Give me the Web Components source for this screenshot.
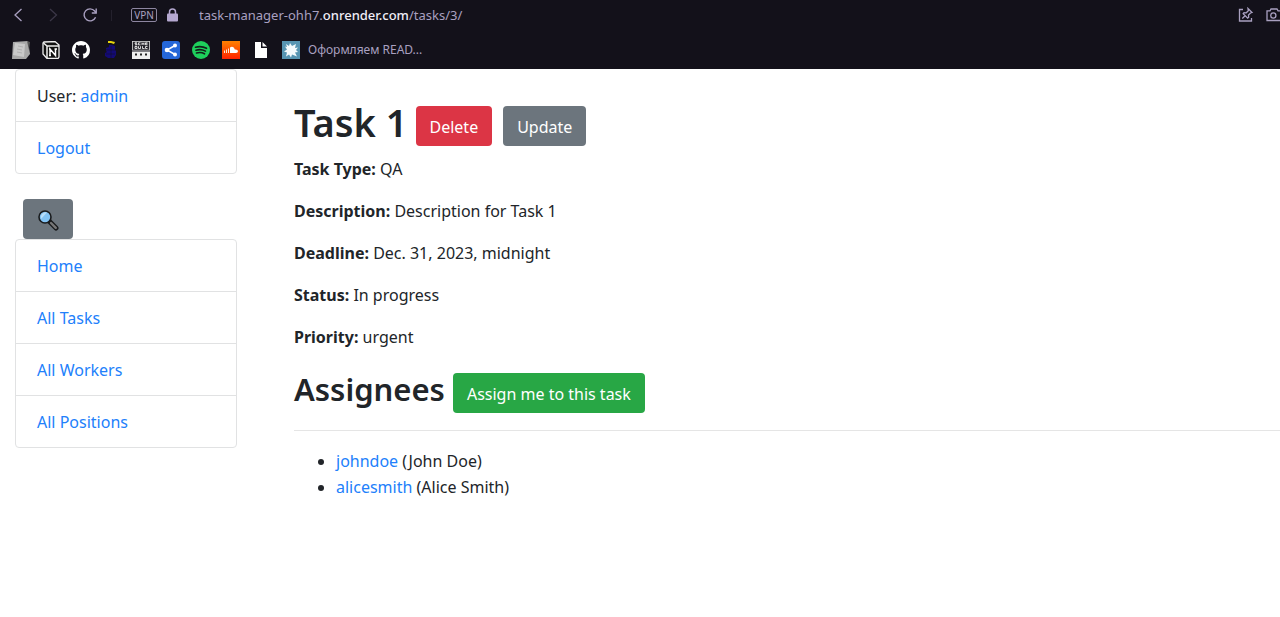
<!DOCTYPE html>
<html lang="en">
<head>
<meta charset="utf-8">
<meta name="viewport" content="width=device-width, initial-scale=1">
<title>Task 1</title>
<style>
  body { margin: 0; background: #fff; color: #212529; font: 16px/26px "Noto Sans", "Open Sans", sans-serif; }
</style>
</head>
<body>
<task-app></task-app>

<template id="browser-bar">
  <style>
    :host { display: block; background: #13111a; color: #a9a0c0; height: 69px; overflow: hidden; }
    .row { display: flex; align-items: center; }
    .nav { height: 30px; padding-left: 12px; font-size: 13px; line-height: 20px; }
    button { display: block; flex: none; border: 0; padding: 0; background: none; color: inherit; font: inherit; }
    svg { display: block; }
    .forward { color: #3b3747; margin-left: 22px; }
    .reload { margin-left: 24px; }
    .divider { width: 1px; height: 11px; margin: 0 19px 0 13px; background: #24212d; }
    .vpn { height: 14px; width: 26px; box-sizing: border-box; border: 1px solid #8d86a0; border-radius: 2px; font-size: 10px; line-height: 12px; text-align: center; }
    .lock { margin: 0 20px 0 9px; }
    .url b { color: #f0edf7; font-weight: 500; }
    .tools { display: flex; gap: 12px; margin-left: auto; }
    .marks { height: 39px; padding-left: 12px; gap: 12px; }
  </style>
  <div class="row nav">
    <button aria-label="Back"><svg width="12" height="16" viewBox="0 0 12 16" fill="none" stroke="currentColor" stroke-width="1.3"><path d="M9.500 2 3 8l6.500 6"/></svg></button>
    <button class="forward" aria-label="Forward" disabled><svg width="12" height="16" viewBox="0 0 12 16" fill="none" stroke="currentColor" stroke-width="1.3"><path d="m4 2 6.500 6L4 14"/></svg></button>
    <button class="reload" aria-label="Reload"><svg width="16" height="16" viewBox="0 0 16 16" fill="none" stroke="currentColor" stroke-width="1.4"><path d="M13.600 10.200A6 6 0 1 1 12.700 4l1.300 1.700"/><path d="M14.200 1.500v4.500H9.800"/></svg></button>
    <span class="divider"></span>
    <button class="vpn">VPN</button>
    <svg class="lock" width="13" height="14" viewBox="0 0 13 14" aria-hidden="true"><rect x="1" y="5.500" width="11" height="8" rx="1" fill="#b5a8d0"/><path d="M3.500 6V4a3 3 0 0 1 6 0v2" fill="none" stroke="#b5a8d0" stroke-width="1.500"/></svg>
    <span class="url">task-manager-ohh7.<b>onrender.com</b>/tasks/3/</span>
    <span class="tools">
      <button aria-label="Pin page"><svg width="16" height="16" viewBox="0 0 16 16" fill="none" stroke="currentColor" stroke-width="1.300"><path d="M5 2.500H1.500v11.500h12V11"/><path d="m10 1.500 4 4-1.500.5-2 2 .2 2.300-1 .8-4.500-4.500.8-.9 2.300.1 2-2zM7.300 8.500 4.300 11.500"/></svg></button>
      <button aria-label="Snapshot"><svg width="14" height="16" viewBox="0 0 14 16" fill="none" stroke="currentColor" stroke-width="1.300"><path d="M14 3.800h-2L11 2H5L4 3.800H1v9.700h13"/><circle cx="7.300" cy="8.500" r="2.600"/></svg></button>
    </span>
  </div>
  <nav class="row marks" aria-label="Bookmarks">
    <book-mark label="Notes"><svg width="18" height="18" viewBox="0 0 18 18"><path d="m1 1 15-1 2 13-4 5H0z" fill="#a9a9a9"/><path d="m3 2 10 1-1 13-11-2z" fill="#c9c9c9"/><path d="m6 5 5 1M5 8l5 1M5 11l5 1" stroke="#b0b0b0"/><path d="m15 0 3 1-1 8z" fill="#555"/></svg></book-mark>
    <book-mark label="Notion"><svg width="18" height="18" viewBox="0 0 18 18"><path d="m2 1 11-.5L17 4v12l-1 1.500H5L1 13V2z" fill="#111" stroke="#eee" stroke-width="1.300"/><path d="m1.500 2 3.500 3h12M5 5v12" fill="none" stroke="#eee" stroke-width="1.500"/><path d="M8 14.500V8l5.500 6.500V8M7 8h1.500M12.500 8H15M7 14.500h2" fill="none" stroke="#fff" stroke-width="1.500"/></svg></book-mark>
    <book-mark label="GitHub"><svg width="18" height="18" viewBox="0 0 16 16"><path fill="#fff" d="M8 0C3.580 0 0 3.580 0 8c0 3.540 2.290 6.530 5.470 7.590.4.070.55-.17.55-.38 0-.19-.01-.82-.01-1.490-2.010.37-2.530-.49-2.690-.94-.09-.23-.48-.94-.82-1.130-.28-.15-.68-.52-.01-.53.63-.01 1.080.58 1.230.82.72 1.210 1.870.87 2.330.66.07-.52.28-.87.51-1.070-1.780-.2-3.640-.89-3.640-3.950 0-.87.31-1.590.82-2.150-.08-.2-.36-1.020.08-2.120 0 0 .67-.21 2.200.82.64-.18 1.320-.27 2-.27s1.360.09 2 .27c1.530-1.040 2.200-.82 2.200-.82.44 1.100.16 1.920.08 2.120.51.56.82 1.270.82 2.150 0 3.070-1.870 3.750-3.650 3.950.29.25.54.73.54 1.480 0 1.070-.01 1.930-.01 2.200 0 .21.15.46.55.38A8.010 8.010 0 0 0 16 8c0-4.420-3.580-8-8-8z"/></svg></book-mark>
    <book-mark label="Castle"><svg width="18" height="18" viewBox="0 0 18 18"><path d="M6 0h3l4 1-1 2-3-1H6z" fill="#e7d50c"/><path d="M7 4h3l3 1v4l1 1v4l-2 3H6l-3-2v-3l2-1-1-1V7l3-1z" fill="#130a75"/><path d="M4 9h9M4 13h9M9 5v12" stroke="#13111a" stroke-width=".5"/></svg></book-mark>
    <book-mark label="Schedule"><svg width="18" height="18" viewBox="0 0 18 18"><path d="M0 0h18v9.500H0z" fill="#d8d8d8"/><path d="M.8.800h16.400v8H.8z" fill="#26242b"/><path d="M5 1.800H3v1h2v1H3M8.500 1.800h-2v2h2M10 1.500v2.500M12 1.500v2.500M10 2.800h2M15.500 1.800h-2v2h2M13.500 2.800h2M3 5.500h2v2H3zM6.500 5.200v2.300h2V5.200M10.500 5.200v2.300h2M15.500 5.500h-2v2h2" fill="none" stroke="#fff" stroke-width=".8"/><path d="M0 10.500h18V18H0z" fill="#eee"/><path d="M3 12.500h2v2H3zM8 12.500h2v2H8zM13 12.500h2v2h-2z" fill="#222"/></svg></book-mark>
    <book-mark label="Share"><svg width="18" height="18" viewBox="0 0 18 18"><rect width="18" height="18" rx="3" fill="#2567d8"/><path d="M13 4.500 5 9l8 4.500" fill="none" stroke="#fff" stroke-width="1.500"/><g fill="#fff"><circle cx="13" cy="4.500" r="2"/><circle cx="5" cy="9" r="2.300"/><circle cx="13" cy="13.500" r="2"/></g></svg></book-mark>
    <book-mark label="Spotify"><svg width="18" height="18" viewBox="0 0 18 18"><circle cx="9" cy="9" r="9" fill="#1ed05c"/><path d="M3.500 6.200q6-1.600 11 1.100M4 9.200q5-1.400 9.500.9M4.500 12q4.500-1.200 8 .8" fill="none" stroke="#13201a" stroke-width="1.600" stroke-linecap="round"/></svg></book-mark>
    <book-mark label="SoundCloud"><svg width="18" height="18" viewBox="0 0 18 18"><defs><linearGradient id="sc" x2="0" y2="1"><stop stop-color="#ff8100"/><stop offset="1" stop-color="#ff2300"/></linearGradient></defs><path d="M0 0h18v18H0z" fill="url(#sc)"/><path d="M8 12V6.500q2-1.500 4 .2l.8 1.800q3-.4 3.200 1.700-.1 1.800-2 1.800z" fill="#fff"/><path d="M2.500 9.500V12M4.500 8.500V12M6.500 7.500V12" stroke="#ffe7d5"/></svg></book-mark>
    <book-mark label="Document"><svg width="18" height="18" viewBox="0 0 18 18"><path d="M3 1h6v6h6v10H3z" fill="#fff"/><path d="m10.500 1 4.500 4.500h-4.500z" fill="#fff"/></svg></book-mark>
    <book-mark label="README"><svg width="18" height="18" viewBox="0 0 18 18"><path d="M0 0h18v18H0z" fill="#5795b2"/><path d="m4 3 3 2 1-3 2 3 4-2-1 4 3-.5-2 2.500 2 2-3 .5 2 4-5-2-1 3-2-3-3 2 1-4-3-1 3-2-2-3 2 .5z" fill="#f4fafc"/></svg><span slot="text">Оформляем READ...</span></book-mark>
  </nav>
</template>

<template id="book-mark">
  <style>
    :host { display: block; }
    a { display: flex; align-items: center; gap: 8px; color: inherit; text-decoration: none; font-size: 12px; line-height: 18px; }
  </style>
  <a href="#"><slot></slot><slot name="text"></slot></a>
</template>

<template id="list-group">
  <style>
    :host { display: block; border: 1px solid #e1e2e3; border-radius: 4px; }
  </style>
  <slot></slot>
</template>

<template id="list-item">
  <style>
    :host { display: block; padding: 13px 21px 12px; border-bottom: 1px solid #e1e2e3; }
    :host(:last-child) { border-bottom: 0; }
  </style>
  <slot></slot>
</template>

<template id="text-link">
  <style>
    :host { display: inline; }
    a { color: #2180fb; text-decoration: none; }
    a:hover { text-decoration: underline; }
  </style>
  <a href="#"><slot></slot></a>
</template>

<template id="action-button">
  <style>
    :host { display: block; }
    button { display: block; box-sizing: border-box; height: 40px; padding: 2px 14px 0; border: 0; border-radius: 4px; background: var(--tone, #6c757d); color: #fff; font: inherit; line-height: 26px; white-space: nowrap; cursor: pointer; }
    :host([tone="danger"]) { --tone: #dc3545; }
    :host([tone="success"]) { --tone: #28a745; }
  </style>
  <button><slot></slot></button>
</template>

<template id="task-field">
  <style>
    :host { display: block; margin-bottom: 16px; }
    b { font-weight: 700; }
  </style>
  <b><slot name="name"></slot></b> <slot></slot>
</template>

<template id="task-app">
  <style>
    :host { display: block; }
    .page { display: grid; grid-template-columns: 222px minmax(0, 1fr); column-gap: 57px; padding-left: 15px; }
    .search { display: flex; padding: 25px 0 0 8px; }
    .search svg { display: block; }
    main { padding-top: 29px; }
    .head { display: flex; align-items: flex-end; gap: 8px; }
    .actions { display: flex; gap: 11px; }
    h1, h2 { margin: 0; font-weight: 600; white-space: nowrap; }
    h1 { font-size: 38px; line-height: 48px; }
    h2 { font-size: 31px; line-height: 47px; }
    .fields { padding-top: 10px; }
    hr { margin: 17px 0; border: 0; border-top: 1px solid #e5e5e5; }
    ul { margin: 0; padding-left: 42px; }
  </style>
  <browser-bar></browser-bar>
  <div class="page">
    <aside>
      <list-group>
        <list-item>User: <text-link>admin</text-link></list-item>
        <list-item><text-link>Logout</text-link></list-item>
      </list-group>
      <div class="search">
        <action-button label="Search"><svg width="22" height="22" viewBox="0 0 22 22"><path d="m12.500 12.500 6.500 6.500" stroke="#191b1d" stroke-width="5" stroke-linecap="round"/><path d="m14 14 4.800 4.800" stroke="#777" stroke-width="2.400" stroke-linecap="round"/><circle cx="8" cy="8" r="6" fill="#82c3f4" stroke="#191b1d" stroke-width="1.600"/><path d="M4 10 10 3.500a5 5 0 0 0-6 6.500" fill="#b8defa"/></svg></action-button>
      </div>
      <list-group>
        <list-item><text-link>Home</text-link></list-item>
        <list-item><text-link>All Tasks</text-link></list-item>
        <list-item><text-link>All Workers</text-link></list-item>
        <list-item><text-link>All Positions</text-link></list-item>
      </list-group>
    </aside>
    <main>
      <div class="head">
        <h1>Task 1</h1>
        <div class="actions">
          <action-button tone="danger">Delete</action-button>
          <action-button>Update</action-button>
        </div>
      </div>
      <div class="fields">
        <task-field><span slot="name">Task Type:</span>QA</task-field>
        <task-field><span slot="name">Description:</span>Description for Task 1</task-field>
        <task-field><span slot="name">Deadline:</span>Dec. 31, 2023, midnight</task-field>
        <task-field><span slot="name">Status:</span>In progress</task-field>
        <task-field><span slot="name">Priority:</span>urgent</task-field>
      </div>
      <div class="head">
        <h2>Assignees</h2>
        <action-button tone="success">Assign me to this task</action-button>
      </div>
      <hr>
      <ul>
        <li><text-link>johndoe</text-link> (John Doe)</li>
        <li><text-link>alicesmith</text-link> (Alice Smith)</li>
      </ul>
    </main>
  </div>
</template>

<script>
  class TemplateElement extends HTMLElement {
    constructor() {
      super();
      const template = document.getElementById(this.localName);
      this.attachShadow({ mode: "open" }).append(template.content.cloneNode(true));
    }
    connectedCallback() {
      const label = this.getAttribute("label");
      const control = this.shadowRoot.querySelector("a, button");
      if (label && control) control.setAttribute("aria-label", label);
    }
  }
  for (const name of ["text-link", "action-button", "list-item", "list-group", "task-field", "book-mark", "browser-bar", "task-app"]) {
    customElements.define(name, class extends TemplateElement {});
  }
</script>
</body>
</html>
